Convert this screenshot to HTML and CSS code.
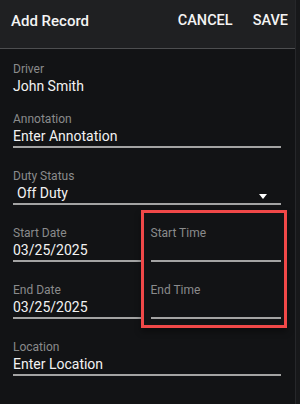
FILE: index.html
```html
<!DOCTYPE html>
<html>
<head>
<meta charset="utf-8">
<link rel="stylesheet" href="styles.css">
</head>
<body>
<div class="main">
  <header class="header">
    <div class="title">Add Record</div>
    <div class="actions">
      <span class="action">CANCEL</span>
      <span class="action">SAVE</span>
    </div>
  </header>
  <div class="form">
    <div class="field static">
      <div class="label">Driver</div>
      <div class="value">John Smith</div>
    </div>
    <div class="field">
      <div class="label">Annotation</div>
      <div class="value line">Enter Annotation</div>
    </div>
    <div class="field">
      <div class="label">Duty Status</div>
      <div class="value line select">
        <span class="select-text">Off Duty</span>
        <span class="caret"></span>
      </div>
    </div>
    <div class="field pair">
      <div class="col">
        <div class="label">Start Date</div>
        <div class="value line">03/25/2025</div>
      </div>
      <div class="col">
        <div class="label">Start Time</div>
        <div class="value line"></div>
      </div>
    </div>
    <div class="field pair">
      <div class="col">
        <div class="label">End Date</div>
        <div class="value line">03/25/2025</div>
      </div>
      <div class="col">
        <div class="label">End Time</div>
        <div class="value line"></div>
      </div>
    </div>
    <div class="field">
      <div class="label">Location</div>
      <div class="value line">Enter Location</div>
    </div>
  </div>
</div>
<div class="scrollbar"></div>
<div class="highlight"></div>
</body>
</html>
```
FILE: styles.css
```css
html, body {
  margin: 0;
  padding: 0;
}
body {
  width: 300px;
  height: 404px;
  overflow: hidden;
  background: #121315;
  display: flex;
  font-family: Roboto, "Liberation Sans", sans-serif;
  color: #f2f2f2;
  position: relative;
}
.main {
  width: 295px;
  flex: none;
}
.scrollbar {
  flex: 1;
  background: #17181a;
  border-left: 1px solid #26272a;
}
.header {
  height: 49px;
  box-sizing: border-box;
  background: #1f2022;
  border-bottom: 1px solid #4d4e50;
  display: flex;
  align-items: flex-start;
  padding: 0 8px 0 11px;
  width: 296px;
}
.title {
  margin-top: 11px;
  font-size: 15px;
  line-height: 20px;
  font-weight: 500;
  color: #f4f4f4;
}
.actions {
  margin-left: auto;
  margin-top: 11px;
  display: flex;
  gap: 20px;
}
.action {
  font-size: 14.5px;
  line-height: 20px;
  font-weight: 500;
  color: #f4f4f4;
}
.form {
  padding: 13px 14px 0 13px;
  display: flex;
  flex-direction: column;
}
.field + .field {
  margin-top: 21px;
}
.field.static + .field {
  margin-top: 17px;
}
.label {
  font-size: 12px;
  line-height: 14px;
  color: #8a8b8c;
}
.value {
  margin-top: 1px;
  font-size: 14px;
  line-height: 18px;
  height: 18px;
  color: #f2f2f2;
}
.value.line {
  padding-bottom: 1px;
  border-bottom: 2px solid #a3a3a3;
}
.select {
  display: flex;
  align-items: flex-end;
}
.select-text {
  padding-left: 4px;
}
.caret {
  margin-left: auto;
  margin-right: 14px;
  margin-bottom: 3px;
  width: 0;
  height: 0;
  border-left: 4px solid transparent;
  border-right: 4px solid transparent;
  border-top: 5px solid #ffffff;
}
.pair {
  display: grid;
  grid-template-columns: 1fr 1fr;
  column-gap: 7px;
}
.highlight {
  position: absolute;
  left: 141px;
  top: 210px;
  width: 146px;
  height: 118px;
  box-sizing: border-box;
  border: 3px solid #f04848;
  box-shadow: 0 4px 6px rgba(0, 0, 0, 0.35);
}
```
